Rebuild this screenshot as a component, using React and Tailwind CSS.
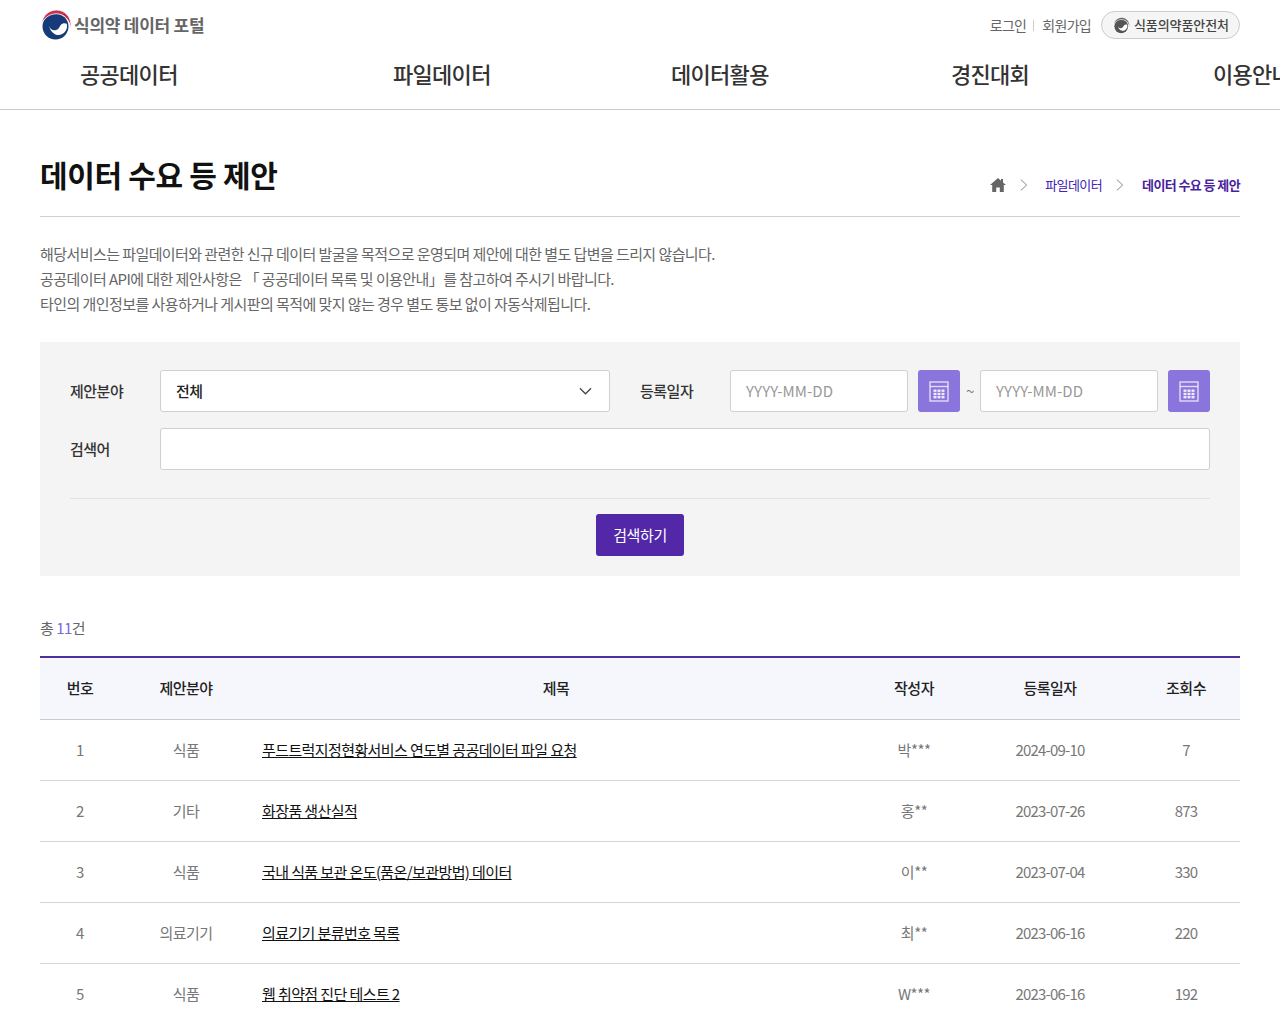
const F = { fontFamily: '"Noto Sans CJK KR", "Noto Sans", sans-serif' };

function Emblem({ size, red = "#c8304a", blue = "#173a78" }) {
  return (
    <svg width={size} height={size} viewBox="0 0 32 32" className="shrink-0">
      <circle cx="15.5" cy="17.5" r="13" fill={blue} />
      <path d="M1.5 15C2.5 6.5 9 1 16.5 1 25 1 31 8 31 16c0 1.2-.1 2.3-.4 3.4C30 11 24 4.8 16.5 4.8 9.5 4.8 4 9 1.5 15z" fill={red} stroke="#fff" strokeWidth="0.8" />
      <path d="M9 16.5c.8 3.6 3.8 5.4 7 4.6 3-.9 3.4-3.6 5-5.4 1.5-1.7 3.8-2 5.8-.9.6 2.6.2 5-1.1 7-2.3 3.4-5.5 4.6-8.2 4.2-4-.6-7.5-4.3-8.5-9.5z" fill="#fff" />
    </svg>
  );
}

function CalIcon() {
  return (
    <svg width="20" height="21" viewBox="0 0 20 21" fill="none" stroke="#fff" strokeOpacity="0.75">
      <rect x="1" y="1" width="18" height="19" strokeWidth="1.4" />
      <line x1="1" y1="5.5" x2="19" y2="5.5" strokeWidth="1.4" />
      {[4.5, 8.5, 12.5].map((x) => [8.5, 11.8, 15].map((y) => (
        <rect key={x + "-" + y} x={x} y={y} width="3" height="2.4" fill="#fff" fillOpacity="0.85" stroke="none" />
      )))}
    </svg>
  );
}

const rows = [
  ["1", "식품", "푸드트럭지정현황서비스 연도별 공공데이터 파일 요청", "박***", "2024-09-10", "7"],
  ["2", "기타", "화장품 생산실적", "홍**", "2023-07-26", "873"],
  ["3", "식품", "국내 식품 보관 온도(품온/보관방법) 데이터", "이**", "2023-07-04", "330"],
  ["4", "의료기기", "의료기기 분류번호 목록", "최**", "2023-06-16", "220"],
  ["5", "식품", "웹 취약점 진단 테스트 2", "W***", "2023-06-16", "192"],
];

const cols = "grid grid-cols-[80px_132px_608px_108px_164px_108px]";

function Field({ children }) {
  return <div className="h-[42px] bg-white border border-[#cfcfcf] rounded-[3px] flex items-center px-[15px] text-[15px] tracking-[-0.5px]">{children}</div>;
}

export default function App() {
  return (
    <div style={F} className="w-[1280px] h-[1024px] overflow-hidden bg-white text-[#222]">
      <header className="h-[110px] border-b border-[#c9c9c9]">
        <div className="mx-10 h-[50px] flex items-center justify-between">
          <div className="flex items-center gap-[2px] -mt-[1px]">
            <Emblem size={32} />
            <span className="text-[17px] font-bold text-[#666] tracking-[-0.25px]">식의약 데이터 포털</span>
          </div>
          <div className="flex items-center text-[14px] text-[#666] tracking-[-0.7px]">
            <span>로그인</span>
            <span className="w-px h-[11px] bg-[#ccc] ml-[7px] mr-[8px]"></span>
            <span>회원가입</span>
            <div className="ml-[10px] w-[139px] h-[28px] border border-[#ccc] bg-[#f5f5f5] rounded-full flex items-center pl-[11px] gap-[4px]">
              <div className="w-[17px] h-[17px] rounded-full bg-white shrink-0">
                <Emblem size={17} red="#666" blue="#555" />
              </div>
              <span className="text-[13px] font-medium text-[#444] tracking-[-0.1px]">식품의약품안전처</span>
            </div>
          </div>
        </div>
        <nav className="h-[50px] -mt-[2px] text-[22px] font-medium text-[#333] whitespace-nowrap flex items-center pl-[80px] tracking-[-0.7px]">
          <span className="w-[313px] shrink-0">공공데이터</span>
          <span className="w-[278px] shrink-0">파일데이터</span>
          <span className="w-[280px] shrink-0">데이터활용</span>
          <span className="w-[262px] shrink-0">경진대회</span>
          <span className="shrink-0">이용안내</span>
        </nav>
      </header>

      <main className="mx-10">
        <div className="h-[107px] border-b border-[#cfcfcf] flex items-end justify-between pb-[16px]">
          <h1 className="text-[30px] font-bold text-[#111] leading-[46px] tracking-[-0.35px] mb-[3px]">데이터 수요 등 제안</h1>
          <div className="flex items-center text-[13px] tracking-[-0.6px] h-[24px] mb-[3px]">
            <svg width="16" height="14" viewBox="0 0 16 14" fill="#666"><path d="M8 0 0 7h2.2v7h4V9.5h3.6V14h4V7H16l-3-2.6V1h-2v1.7z" /></svg>
            <svg width="8" height="14" viewBox="0 0 9 14" fill="none" stroke="#777" className="ml-[14px] mr-[17px]"><path d="m1 1 6.5 6L1 13" /></svg>
            <span className="text-[#3f22b8]">파일데이터</span>
            <svg width="8" height="14" viewBox="0 0 9 14" fill="none" stroke="#777" className="ml-[14px] mr-[18px]"><path d="m1 1 6.5 6L1 13" /></svg>
            <span className="text-[#4a1f9e] font-bold">데이터 수요 등 제안</span>
          </div>
        </div>

        <div className="mt-[24px] text-[15px] leading-[25px] text-[#666] tracking-[-0.57px]">
          <p>해당서비스는 파일데이터와 관련한 신규 데이터 발굴을 목적으로 운영되며 제안에 대한 별도 답변을 드리지 않습니다.</p>
          <p>공공데이터 API에 대한 제안사항은 「 공공데이터 목록 및 이용안내」를 참고하여 주시기 바랍니다.</p>
          <p>타인의 개인정보를 사용하거나 게시판의 목적에 맞지 않는 경우 별도 통보 없이 자동삭제됩니다.</p>
        </div>

        <section className="mt-[26px] h-[234px] bg-[#f4f4f4] px-[30px] pt-[28px]">
          <div className="grid grid-cols-[90px_450px_30px_90px_178px_10px_42px_20px_178px_10px_42px] items-center text-[15px] font-medium text-[#333] tracking-[-0.5px]">
            <span>제안분야</span>
            <Field>
              <span className="flex-1 text-[#222]">전체</span>
              <svg width="13" height="8" viewBox="0 0 14 8" fill="none" stroke="#444" strokeWidth="1.3" className="mr-[2px]"><path d="m1 1 6 6 6-6" /></svg>
            </Field>
            <span></span>
            <span>등록일자</span>
            <Field><span className="font-normal text-[#999] tracking-[0.1px]">YYYY-MM-DD</span></Field>
            <span></span>
            <div className="h-[42px] rounded-[3px] bg-[#8a75dc] flex items-center justify-center"><CalIcon /></div>
            <span className="text-center font-normal text-[#777]">~</span>
            <Field><span className="font-normal text-[#999] tracking-[0.1px]">YYYY-MM-DD</span></Field>
            <span></span>
            <div className="h-[42px] rounded-[3px] bg-[#8a75dc] flex items-center justify-center"><CalIcon /></div>
          </div>
          <div className="mt-[16px] grid grid-cols-[90px_1fr] items-center text-[15px] font-medium text-[#333] tracking-[-0.5px]">
            <span>검색어</span>
            <Field />
          </div>
          <div className="mt-[28px] border-t border-[#e3e3e3] pt-[15px] flex justify-center">
            <button className="w-[88px] h-[42px] rounded-[3px] bg-[#5228a8] text-white text-[15px] tracking-[-0.4px]">검색하기</button>
          </div>
        </section>

        <p className="mt-[41px] text-[15px] text-[#666] leading-[22px] tracking-[-0.5px]">총 <span className="text-[#7c66d8]">11</span>건</p>

        <div className="mt-[17px] border-t-2 border-[#4f2f9f]">
          <div className={cols + " h-[62px] items-center text-center bg-[#f6f7fc] border-b border-[#c9c9d0] text-[15px] font-medium text-[#222] tracking-[-0.5px]"}>
            <span>번호</span><span>제안분야</span><span>제목</span><span>작성자</span><span>등록일자</span><span>조회수</span>
          </div>
          {rows.map((r) => (
            <div key={r[0]} className={cols + " h-[61px] items-center text-center border-b border-[#d5d5d5] text-[15px] text-[#777] tracking-[-0.5px]"}>
              <span>{r[0]}</span>
              <span>{r[1]}</span>
              <span className="text-left pl-[10px] text-[#111] underline tracking-[-0.6px]">{r[2]}</span>
              <span>{r[3]}</span>
              <span className="tracking-[-0.8px]">{r[4]}</span>
              <span className="tracking-[-0.8px]">{r[5]}</span>
            </div>
          ))}
        </div>
      </main>
    </div>
  );
}
